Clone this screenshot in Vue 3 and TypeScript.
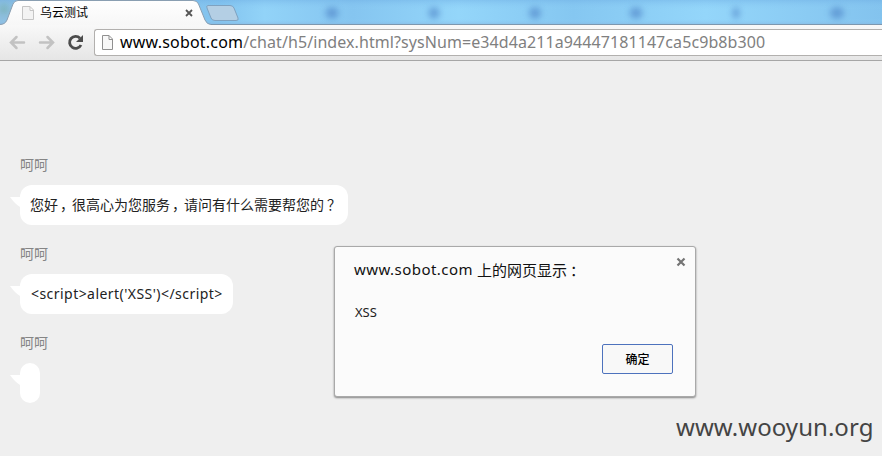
<script setup lang="ts">
interface Message {
  sender: string
  parts: string[]
  kind: string
}

const messages: Message[] = [
  { sender: '呵呵', parts: ['您好', '，', '很高心为您服务', '，', '请问有什么需要帮您的', '？'], kind: 'greeting' },
  { sender: '呵呵', parts: ["<script>alert('XSS')<\/script>"], kind: 'code' },
  { sender: '呵呵', parts: [], kind: 'empty' },
]

const markClass = (part: string): string => {
  if (part === '，') return 'comma'
  return part === '？' ? 'question' : ''
}

const smudges = [
  { x: 332, w: 13 },
  { x: 434, w: 11 },
  { x: 535, w: 12 },
  { x: 636, w: 13 },
  { x: 736, w: 7 },
  { x: 837, w: 14 },
]
</script>

<template>
  <div class="window">
    <header class="chrome">
      <svg class="tabs" width="882" height="25" viewBox="0 0 882 25">
        <defs>
          <linearGradient id="sky" x1="0" x2="1" y1="0" y2="0">
            <stop offset="0" stop-color="#8fbfe0" />
            <stop offset="0.25" stop-color="#83c4ef" />
            <stop offset="0.3" stop-color="#92d3f8" />
            <stop offset="0.4" stop-color="#85c5f0" />
            <stop offset="0.52" stop-color="#94d6fa" />
            <stop offset="0.65" stop-color="#85c7f1" />
            <stop offset="0.8" stop-color="#94d6fa" />
            <stop offset="1" stop-color="#83c3ee" />
          </linearGradient>
          <linearGradient id="shade" x1="0" x2="0" y1="0" y2="1">
            <stop offset="0" stop-color="#6faee4" stop-opacity="0.45" />
            <stop offset="0.4" stop-color="#8fd0f7" stop-opacity="0" />
            <stop offset="0.75" stop-color="#8fd0f7" stop-opacity="0" />
            <stop offset="1" stop-color="#86b1db" stop-opacity="0.6" />
          </linearGradient>
          <linearGradient id="tab" x1="0" x2="0" y1="0" y2="1">
            <stop offset="0" stop-color="#ffffff" />
            <stop offset="1" stop-color="#f7f7f7" />
          </linearGradient>
          <filter id="soft" x="-80%" y="-80%" width="260%" height="260%">
            <feGaussianBlur stdDeviation="3" />
          </filter>
        </defs>
        <rect width="882" height="25" fill="url(#sky)" />
        <rect width="882" height="25" fill="url(#shade)" />
        <ellipse cx="4" cy="9" rx="5" ry="5" fill="#6aa99a" opacity="0.5" filter="url(#soft)" />
        <ellipse
          v-for="s in smudges"
          :key="s.x"
          :cx="s.x"
          cy="13"
          :rx="s.w / 2"
          ry="6"
          fill="#4f86c9"
          opacity="0.65"
          filter="url(#soft)"
        />
        <path d="M0 24.5H882" stroke="#7d97ae" />
        <path d="M208 5.5H230Q233 5.5 234 8L238 18Q239 20.5 236 20.5H215Q212 20.5 211 18L207 8Q206 5.5 208 5.5Z" fill="#b4cfe4" stroke="#7fa2c0" />
        <path d="M0 25V24.5Q5 24.5 7 20L13 4Q14.5 .5 18 .5H193Q197 .5 198.5 4L205 20Q207 24.5 211 24.5V25Z" fill="url(#tab)" />
        <path d="M0 24.5Q5 24.5 7 20L13 4Q14.5 .5 18 .5H193Q197 .5 198.5 4L205 20Q207 24.5 211 24.5" fill="none" stroke="#8a9fb2" />
        <path d="M22.5 6.5H30L33.5 10V19.5H22.5ZM30 6.5V10.5H33.5" fill="#f3f3f3" stroke="#c5c5c5" />
        <path d="M186 10L192 16M192 10L186 16" stroke="#555" stroke-width="1.8" />
      </svg>
      <span class="tab-title">乌云测试</span>
      <div class="toolbar">
        <svg class="nav" width="92" height="35" viewBox="0 0 92 35">
          <g fill="none" stroke="#c2c2c2" stroke-width="2.5" stroke-linecap="round">
            <path d="M24 17.5H12M16.5 12L11 17.5L16.5 23" />
            <path d="M40 17.5H52M47.5 12L53 17.5L47.5 23" />
          </g>
          <path d="M80 13.3A6 6 0 1 0 81 20" fill="none" stroke="#4c4c4c" stroke-width="2.8" />
          <path d="M83 10V17H76Z" fill="#4c4c4c" />
        </svg>
        <div class="address">
          <svg width="13" height="16" viewBox="0 0 13 16">
            <path d="M1.5 .5H8L11.5 4V14.5H1.5ZM8 .5V4.5H11.5" fill="#f8f8f8" stroke="#909090" />
          </svg>
          <span class="url"><b>www.sobot.com</b>/chat/h5/index.html?sysNum=e34d4a211a94447181147ca5c9b8b300</span>
        </div>
      </div>
    </header>

    <main class="chat">
      <section v-for="(m, i) in messages" :key="i" class="message">
        <div class="sender">{{ m.sender }}</div>
        <div class="bubble" :class="m.kind">
          <svg class="tail" width="10" height="12" viewBox="0 0 10 12"><path d="M0 0H10V10Q5 7 0 0Z" fill="#fff" /></svg>
          <span v-for="(p, j) in m.parts" :key="j" :class="markClass(p)">{{ p }}</span>
        </div>
      </section>
    </main>

    <div class="dialog" role="alertdialog">
      <div class="dialog-head">
        <span class="host">www.sobot.com</span>
        <span class="says">上的网页显示</span><span class="colon">：</span>
      </div>
      <svg class="close" width="10" height="10" viewBox="0 0 10 10"><path d="M1.5 1.5L8.5 8.5M8.5 1.5L1.5 8.5" stroke="#747474" stroke-width="2.2" /></svg>
      <p class="dialog-text">XSS</p>
      <button class="ok">确定</button>
    </div>

    <div class="watermark">www.wooyun.org</div>
  </div>
</template>

<style>
body {
  margin: 0;
  overflow: hidden;
}
</style>

<style scoped>
.window {
  position: relative;
  box-sizing: border-box;
  width: 882px;
  height: 456px;
  overflow: hidden;
  background: #efefef;
  font-family: "Noto Sans", "Noto Sans CJK SC", sans-serif;
}
.chrome {
  position: relative;
  height: 61px;
}
.tabs {
  display: block;
}
.tab-title {
  position: absolute;
  left: 40px;
  top: 3px;
  font: 12px/18px "Noto Sans CJK SC", sans-serif;
  color: #000;
}
.toolbar {
  display: flex;
  box-sizing: border-box;
  height: 36px;
  border-bottom: 1px solid #a6a6a6;
  background: linear-gradient(#f8f8f8, #e6e6e6);
}
.nav {
  flex: none;
  width: 92px;
  margin-right: 2px;
}
.address {
  display: flex;
  box-sizing: border-box;
  flex: 1;
  height: 27px;
  margin-top: 4px;
  padding: 5px 0 0 6px;
  border: 1px solid #b2b0ae;
  border-right: 0;
  border-radius: 3px 0 0 3px;
  background: #fff;
}
.url {
  margin: -5px 0 0 6px;
  color: #808080;
  font-size: 16px;
  letter-spacing: 0.08px;
  line-height: 25px;
  white-space: nowrap;
}
.url b {
  color: #000;
  font-weight: 400;
  letter-spacing: 0.2px;
}
.chat {
  padding: 93px 0 0 20px;
}
.message {
  height: 89px;
}
.sender {
  height: 31px;
  color: #858585;
  font: 14px/21px "Noto Sans CJK SC", sans-serif;
}
.bubble {
  position: relative;
  display: flex;
  box-sizing: border-box;
  width: 20px;
  height: 40px;
  padding-left: 10px;
  border-radius: 12px;
  background: #fff;
  color: #222;
  font-size: 14px;
  line-height: 39px;
  white-space: nowrap;
}
.greeting {
  width: 328px;
  font-family: "Noto Sans CJK SC", sans-serif;
}
.code {
  width: 213px;
  padding-left: 11px;
  letter-spacing: 0.45px;
}
.empty {
  border-radius: 10px;
}
.tail {
  position: absolute;
  left: -10px;
  top: 12px;
}
.comma,
.question {
  box-sizing: border-box;
  flex: none;
  width: 14px;
  padding-left: 2px;
}
.question {
  padding-left: 3px;
}
.dialog {
  position: absolute;
  left: 334px;
  top: 246px;
  display: flex;
  flex-direction: column;
  box-sizing: border-box;
  width: 362px;
  height: 151px;
  padding: 11px 22px 0 19px;
  border: 1px solid #a9a9a9;
  border-radius: 3px;
  background: #fbfbfb;
  box-shadow: 0 1px 2px rgba(0, 0, 0, 0.45);
}
.dialog-head {
  display: flex;
  color: #111;
  font-size: 15px;
  line-height: 23px;
  white-space: nowrap;
}
.host {
  width: 123px;
  letter-spacing: 0.45px;
}
.says,
.colon {
  font-family: "Noto Sans CJK SC", sans-serif;
}
.colon {
  padding-left: 3px;
}
.close {
  position: absolute;
  right: 9px;
  top: 10px;
}
.dialog-text {
  margin: 20px 0 0 1px;
  color: #222;
  font-size: 13px;
  line-height: 22px;
}
.ok {
  align-self: flex-end;
  width: 71px;
  height: 30px;
  margin-top: 21px;
  padding: 0;
  border: 1px solid #4d72bd;
  border-radius: 2px;
  background: #f8f8f8;
  color: #000;
  font: 500 12px/26px "Noto Sans CJK SC", sans-serif;
}
.watermark {
  position: absolute;
  left: 676px;
  top: 409px;
  color: #444;
  font-size: 24px;
  line-height: 36px;
  letter-spacing: 0.05px;
  white-space: nowrap;
}
</style>
